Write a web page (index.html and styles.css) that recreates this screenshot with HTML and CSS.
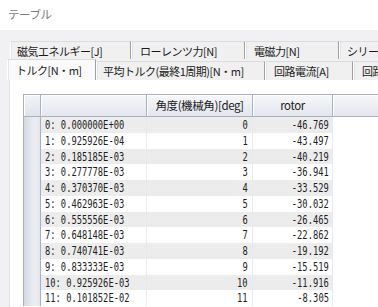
FILE: index.html
```html
<!DOCTYPE html>
<html lang="ja">
<head>
<meta charset="utf-8">
<title>テーブル</title>
<link rel="stylesheet" href="styles.css">
</head>
<body>
<div class="title">テーブル</div>
<div class="tabs">
  <div class="tabrow back">
    <div class="tab t1">磁気エネルギー[J]</div>
    <div class="tab t2">ローレンツ力[N]</div>
    <div class="tab t3">電磁力[N]</div>
    <div class="tab t4">シリーズ</div>
  </div>
  <div class="tabrow front">
    <div class="tab sel s1">トルク[N・m]</div>
    <div class="tab s2">平均トルク(最終1周期)[N・m]</div>
    <div class="tab s3">回路電流[A]</div>
    <div class="tab s4">回路</div>
  </div>
  <div class="panel">
    <div class="grid">
      <div class="row hdr">
        <div class="c c0"></div>
        <div class="c c1"></div>
        <div class="c c2">角度(機械角)[deg]</div>
        <div class="c c3">rotor</div>
        <div class="c c4"></div>
      </div>
      <div class="row odd"><div class="c c0"></div><div class="c c1"><span class="v">0: 0.000000E+00</span></div><div class="c c2"><span class="v">0</span></div><div class="c c3"><span class="v">-46.769</span></div><div class="c c4"></div></div>
      <div class="row"><div class="c c0"></div><div class="c c1"><span class="v">1: 0.925926E-04</span></div><div class="c c2"><span class="v">1</span></div><div class="c c3"><span class="v">-43.497</span></div><div class="c c4"></div></div>
      <div class="row odd"><div class="c c0"></div><div class="c c1"><span class="v">2: 0.185185E-03</span></div><div class="c c2"><span class="v">2</span></div><div class="c c3"><span class="v">-40.219</span></div><div class="c c4"></div></div>
      <div class="row"><div class="c c0"></div><div class="c c1"><span class="v">3: 0.277778E-03</span></div><div class="c c2"><span class="v">3</span></div><div class="c c3"><span class="v">-36.941</span></div><div class="c c4"></div></div>
      <div class="row odd"><div class="c c0"></div><div class="c c1"><span class="v">4: 0.370370E-03</span></div><div class="c c2"><span class="v">4</span></div><div class="c c3"><span class="v">-33.529</span></div><div class="c c4"></div></div>
      <div class="row"><div class="c c0"></div><div class="c c1"><span class="v">5: 0.462963E-03</span></div><div class="c c2"><span class="v">5</span></div><div class="c c3"><span class="v">-30.032</span></div><div class="c c4"></div></div>
      <div class="row odd"><div class="c c0"></div><div class="c c1"><span class="v">6: 0.555556E-03</span></div><div class="c c2"><span class="v">6</span></div><div class="c c3"><span class="v">-26.465</span></div><div class="c c4"></div></div>
      <div class="row"><div class="c c0"></div><div class="c c1"><span class="v">7: 0.648148E-03</span></div><div class="c c2"><span class="v">7</span></div><div class="c c3"><span class="v">-22.862</span></div><div class="c c4"></div></div>
      <div class="row odd"><div class="c c0"></div><div class="c c1"><span class="v">8: 0.740741E-03</span></div><div class="c c2"><span class="v">8</span></div><div class="c c3"><span class="v">-19.192</span></div><div class="c c4"></div></div>
      <div class="row"><div class="c c0"></div><div class="c c1"><span class="v">9: 0.833333E-03</span></div><div class="c c2"><span class="v">9</span></div><div class="c c3"><span class="v">-15.519</span></div><div class="c c4"></div></div>
      <div class="row odd"><div class="c c0"></div><div class="c c1"><span class="v">10: 0.925926E-03</span></div><div class="c c2"><span class="v">10</span></div><div class="c c3"><span class="v">-11.916</span></div><div class="c c4"></div></div>
      <div class="row"><div class="c c0"></div><div class="c c1"><span class="v">11: 0.101852E-02</span></div><div class="c c2"><span class="v">11</span></div><div class="c c3"><span class="v">-8.305</span></div><div class="c c4"></div></div>
    </div>
  </div>
</div>
</body>
</html>
```
FILE: styles.css
```css
html, body {
  margin: 0;
  padding: 0;
  background: #ffffff;
  width: 378px;
  height: 307px;
  overflow: hidden;
}
body {
  font-family: "Noto Sans CJK JP", "Noto Sans", sans-serif;
  color: #1a1a1a;
}
.title {
  height: 30px;
  line-height: 28px;
  padding-left: 8px;
  font-size: 11.5px;
  color: #7c7c7c;
  letter-spacing: -0.4px;
  box-sizing: border-box;
}
.tabs {
  background: #f1f1f3;
  height: 277px;
  padding-top: 11px;
  box-sizing: border-box;
  overflow: hidden;
}
.tabrow {
  display: flex;
  white-space: nowrap;
}
.back {
  margin-left: 10px;
  height: 18px;
}
.front {
  margin-left: 7px;
  height: 21px;
  align-items: flex-end;
}
.tab {
  box-sizing: border-box;
  flex: none;
  font-size: 11px;
  letter-spacing: -0.5px;
  background: #f0f0f0;
  border-top: 1px solid #dcdcdc;
  border-left: 1px solid #ffffff;
  border-right: 1px solid #a0a0a0;
  box-shadow: inset 1px 0 0 #e4e4e4;
  padding-left: 6px;
  overflow: hidden;
}
.back .tab {
  height: 18px;
  line-height: 18px;
}
.front .tab {
  height: 19px;
  line-height: 18px;
}
.front .sel {
  height: 21px;
  line-height: 20px;
  background: #fafafa;
  padding-left: 8px;
}
.t1 { width: 121px; }
.t2 { width: 114px; padding-left: 8px; }
.t3 { width: 94px; padding-left: 8px; }
.t4 { width: 60px; padding-left: 7px; }
.s1 { width: 89px; }
.s2 { width: 169px; }
.s3 { width: 88px; padding-left: 8px; }
.s4 { width: 60px; padding-left: 8px; }
.panel {
  background: #ffffff;
  margin-left: 9px;
  border-left: 1px solid #e2e2e2;
  height: 227px;
  padding: 14px 0 0 13px;
  box-sizing: border-box;
  overflow: hidden;
}
.grid {
  width: 420px;
  border-top: 1px solid #a9b0c2;
  border-left: 1px solid #a9b0c2;
}
.row {
  display: flex;
  height: 15.75px;
}
.c {
  box-sizing: border-box;
  flex: none;
  white-space: nowrap;
  overflow: visible;
  font-family: "DejaVu Sans Mono", monospace;
  font-size: 13px;
  line-height: 15.75px;
  color: #1e1e1e;
}
.c0 { width: 17px; }
.c1 { width: 106px; padding-left: 4px; }
.c2 { width: 106px; text-align: right; padding-right: 4px; }
.c3 { width: 80px; text-align: right; padding-right: 3px; }
.c4 { flex: 1; }
.v {
  display: inline-block;
  transform: scaleX(0.675);
  transform-origin: 0 50%;
}
.c2 .v, .c3 .v {
  transform-origin: 100% 50%;
}
.row .c0 {
  background: linear-gradient(to right, #d6dae4, #eceef3 70%, #e3e6ee);
  border-right: 1px solid #a9b0c2;
}
.row .c1, .row .c2, .row .c3 {
  border-right: 1px solid #e8e8ee;
}
.odd .c1, .odd .c2, .odd .c3 {
  background: #ececec;
}
.hdr {
  height: 22px;
}
.hdr .c {
  height: 22px;
  background: linear-gradient(#f6f7fa, #e3e6ed);
  border-bottom: 1px solid #a9b0c2;
  border-right: 1px solid #a9b0c2;
  box-shadow: inset 1px 1px 0 #ffffff;
  font-family: "Noto Sans CJK JP", "Noto Sans", sans-serif;
  font-size: 11.5px;
  letter-spacing: -0.4px;
  line-height: 21px;
  text-align: center;
  padding: 0;
  color: #1a1a1a;
}
.hdr .c0 {
  background: linear-gradient(#f3f4f8, #dfe3ea);
}
```
